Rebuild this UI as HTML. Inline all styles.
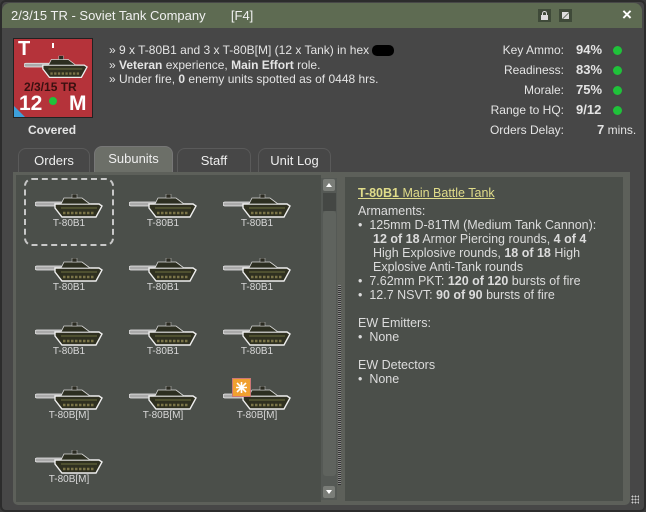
<!DOCTYPE html>
<html><head><style>
*{margin:0;padding:0;box-sizing:border-box}
body{width:646px;height:512px;background:#3a3a3a;font-family:"Liberation Sans",sans-serif;color:#e4e4e4;position:relative;overflow:hidden}
.win{position:absolute;left:0;top:0;width:646px;height:512px;background:#474747;border:2px solid #2c2c2c;border-radius:6px}
.title{position:absolute;left:2px;top:3px;width:640px;height:25px;background:#5e6b52;border-radius:8px 8px 0 0;font-size:13px;color:#f0f0f0;line-height:25px;padding-left:9px}
.a{position:absolute;font-size:12px;white-space:nowrap}
.dot{position:absolute;left:613px;width:9px;height:9px;border-radius:50%;background:#1fc23a}
.sl{position:absolute;right:82px;font-size:12px;text-align:right;white-space:nowrap}
.sv{position:absolute;left:576px;font-size:13px;font-weight:bold;white-space:nowrap}
.tab{position:absolute;top:148px;height:25px;border:1px solid #5a5a5a;border-bottom:none;border-radius:8px 8px 0 0;background:#474747;font-size:13px;text-align:center;line-height:24px;color:#eee}
.frame{position:absolute;left:13px;top:172px;width:617px;height:333px;background:#5d605a;border-radius:0 0 5px 5px}
.left{position:absolute;left:16px;top:175px;width:305px;height:327px;background:#4b4f4a}
.sb{position:absolute;left:321px;top:178px;width:16px;height:322px;background:#555955}
.right{position:absolute;left:345px;top:177px;width:278px;height:324px;background:#4b4f4a}
.u{position:absolute;width:90px;text-align:center;font-size:10px;color:#d8d8d8;line-height:11px}
.u svg{display:block;margin:0 auto}
.r{position:absolute;left:358px;font-size:12.5px;line-height:14px;color:#dcdcdc;white-space:nowrap}
</style></head><body>
<div class="win"></div>
<div class="title">2/3/15 TR - Soviet Tank Company &nbsp;&nbsp;&nbsp;&nbsp;&nbsp;&nbsp;[F4]</div>
<div style="position:absolute;left:538px;top:9px;width:13px;height:13px;background:#3f4a39"><div style="position:absolute;left:3px;top:6px;width:7px;height:5px;background:#ddd"></div><div style="position:absolute;left:4px;top:2px;width:5px;height:5px;border:1.5px solid #ddd;border-bottom:none;border-radius:3px 3px 0 0"></div></div>
<div style="position:absolute;left:559px;top:9px;width:13px;height:13px;background:#3f4a39"><svg width="13" height="13"><path d="M3 3h7L3 10z" fill="#ddd"/><path d="M10 4v6H4z" fill="#ddd"/></svg></div>
<div class="a" style="left:622px;top:5px;font-size:17px;font-weight:bold;color:#fff">×</div>

<svg width="0" height="0" style="position:absolute"><defs><symbol id="t" viewBox="0 0 68 24"><rect x="0" y="8" width="28" height="4" rx="2" fill="#aaa" stroke="#eee" stroke-width=".8"/><path d="M20 10h44l3 2-6 11H27l-7-9z" fill="#2f3020" stroke="#eee" stroke-width="1.4"/><path d="M29 4h18l8 6H26z" fill="#2c2e20" stroke="#ddd" stroke-width=".8"/><rect x="37" y="0" width="5" height="4" fill="#2a2a20" stroke="#ccc" stroke-width=".5"/><path d="M26 14h36" stroke="#4e5030" stroke-width="2"/><path d="M28 19h32" stroke="#7a7448" stroke-width="2.5" stroke-dasharray="2.5 1.5"/></symbol></defs></svg>

<!-- counter -->
<div style="position:absolute;left:13px;top:38px;width:80px;height:80px;background:#b5333a;border:1px solid #222">
<div class="a" style="left:4px;top:-1px;font-size:20px;font-weight:bold;color:#fff">T</div>
<div style="position:absolute;left:38px;top:4px;width:2px;height:5px;background:#fff"></div>
<svg style="position:absolute;left:10px;top:16px" width="64" height="24" viewBox="0 0 68 24"><use href="#t"/></svg>
<div class="a" style="left:10px;top:41px;font-size:12px;font-weight:bold;color:#3a1010">2/3/15 TR</div>
<div class="a" style="left:5px;top:53px;font-size:21px;font-weight:bold;color:#fff">12</div>
<div style="position:absolute;left:35px;top:58px;width:8px;height:8px;border-radius:50%;background:#1fc23a"></div>
<div class="a" style="left:55px;top:53px;font-size:21px;font-weight:bold;color:#fff">M</div>
<div style="position:absolute;left:0;bottom:0;width:0;height:0;border-left:11px solid #3da0db;border-top:11px solid transparent"></div>
</div>
<div class="a" style="left:28px;top:123px;font-weight:bold;font-size:12px">Covered</div>

<div class="a" style="left:109px;top:43px;line-height:14.5px">» 9 x T-80B1 and 3 x T-80B[M] (12 x Tank) in hex <span style="display:inline-block;width:22px;height:11px;background:#000;border-radius:5px;vertical-align:middle"></span><br>» <b>Veteran</b> experience, <b>Main Effort</b> role.<br>» Under fire, <b>0</b> enemy units spotted as of 0448 hrs.</div>

<div class="sl" style="top:43px">Key Ammo:</div><div class="sv" style="top:42px">94%</div><div class="dot" style="top:46px"></div>
<div class="sl" style="top:63px">Readiness:</div><div class="sv" style="top:62px">83%</div><div class="dot" style="top:66px"></div>
<div class="sl" style="top:83px">Morale:</div><div class="sv" style="top:82px">75%</div><div class="dot" style="top:86px"></div>
<div class="sl" style="top:103px">Range to HQ:</div><div class="sv" style="top:102px">9/12</div><div class="dot" style="top:106px"></div>
<div class="sl" style="top:123px">Orders Delay:</div><div class="a" style="left:597px;top:122px"><b style="font-size:13px">7</b> mins.</div>

<div class="tab" style="left:18px;width:72px">Orders</div>
<div class="tab" style="left:94px;width:79px;top:146px;height:27px;background:#6c6f68;border-color:#777">Subunits</div>
<div class="tab" style="left:177px;width:74px">Staff</div>
<div class="tab" style="left:258px;width:73px">Unit Log</div>

<div class="frame"></div>
<div class="left"></div>
<div class="sb"></div>
<div style="position:absolute;left:323px;top:179px;width:12px;height:12px;background:#7a7d78;border-radius:2px"></div>
<div style="position:absolute;left:326px;top:183px;border-left:3px solid transparent;border-right:3px solid transparent;border-bottom:4px solid #fff"></div>
<div style="position:absolute;left:323px;top:193px;width:13px;height:18px;background:#444744"></div>
<div style="position:absolute;left:323px;top:211px;width:13px;height:265px;background:#5f635e;border-radius:3px"></div>
<div style="position:absolute;left:323px;top:486px;width:12px;height:12px;background:#7a7d78;border-radius:2px"></div>
<div style="position:absolute;left:326px;top:490px;border-left:3px solid transparent;border-right:3px solid transparent;border-top:4px solid #fff"></div>
<div style="position:absolute;left:338px;top:285px;width:3px;height:200px;background:repeating-linear-gradient(#888 0 1px,#333 1px 2px)"></div>
<div class="right"></div>
<div style="position:absolute;left:24px;top:178px;width:90px;height:68px;border:2px dashed #c8c8c8;border-radius:8px"></div>

<div class="u" style="left:24px;top:194px"><svg width="68" height="24"><use href="#t"/></svg>T-80B1</div>
<div class="u" style="left:118px;top:194px"><svg width="68" height="24"><use href="#t"/></svg>T-80B1</div>
<div class="u" style="left:212px;top:194px"><svg width="68" height="24"><use href="#t"/></svg>T-80B1</div>
<div class="u" style="left:24px;top:258px"><svg width="68" height="24"><use href="#t"/></svg>T-80B1</div>
<div class="u" style="left:118px;top:258px"><svg width="68" height="24"><use href="#t"/></svg>T-80B1</div>
<div class="u" style="left:212px;top:258px"><svg width="68" height="24"><use href="#t"/></svg>T-80B1</div>
<div class="u" style="left:24px;top:322px"><svg width="68" height="24"><use href="#t"/></svg>T-80B1</div>
<div class="u" style="left:118px;top:322px"><svg width="68" height="24"><use href="#t"/></svg>T-80B1</div>
<div class="u" style="left:212px;top:322px"><svg width="68" height="24"><use href="#t"/></svg>T-80B1</div>
<div class="u" style="left:24px;top:386px"><svg width="68" height="24"><use href="#t"/></svg>T-80B[M]</div>
<div class="u" style="left:118px;top:386px"><svg width="68" height="24"><use href="#t"/></svg>T-80B[M]</div>
<div class="u" style="left:212px;top:386px"><svg width="68" height="24"><use href="#t"/></svg>T-80B[M]</div>
<div class="u" style="left:24px;top:450px"><svg width="68" height="24"><use href="#t"/></svg>T-80B[M]</div>
<div style="position:absolute;left:232px;top:378px;width:19px;height:19px;background:#f0a030;border:1px solid #c77"><svg width="17" height="17"><path d="M4 4l9 9M13 4l-9 9M8.5 3v11M3 8.5h11" stroke="#fff" stroke-width="1.6"/></svg></div>

<div class="r" style="top:186px;color:#e0dc8a;text-decoration:underline"><b>T-80B1</b> Main Battle Tank</div>
<div class="r" style="top:204px">Armaments:</div>
<div class="r" style="top:218px;line-height:14px">
<div>• &nbsp;125mm D-81TM (Medium Tank Cannon):</div>
<div style="padding-left:15px"><b>12 of 18</b> Armor Piercing rounds, <b>4 of 4</b><br>High Explosive rounds, <b>18 of 18</b> High<br>Explosive Anti-Tank rounds</div>
<div>• &nbsp;7.62mm PKT: <b>120 of 120</b> bursts of fire</div>
<div>• &nbsp;12.7 NSVT: <b>90 of 90</b> bursts of fire</div>
</div>
<div class="r" style="top:316px">EW Emitters:</div>
<div class="r" style="top:330px">• &nbsp;None</div>
<div class="r" style="top:358px">EW Detectors</div>
<div class="r" style="top:372px">• &nbsp;None</div>
<div style="position:absolute;left:631px;top:495px;width:8px;height:9px;background:radial-gradient(circle,#ccc 0 0.8px,transparent 1px) 0 0/3px 3px"></div>
</body></html>
